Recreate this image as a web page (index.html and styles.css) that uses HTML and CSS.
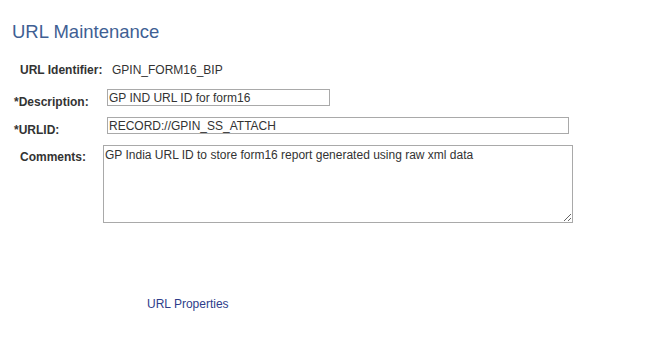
FILE: index.html
```html
<!DOCTYPE html>
<html>
<head>
<meta charset="utf-8">
<link rel="stylesheet" href="styles.css">
</head>
<body>
<div class="page">
  <h1 class="title">URL Maintenance</h1>
  <div class="form">
    <div class="label plain row-id">URL Identifier:</div>
    <div class="value row-id">GPIN_FORM16_BIP</div>

    <div class="label low row-desc">*Description:</div>
    <div class="field row-desc"><input class="input input-desc" type="text" value="GP IND URL ID for form16"></div>

    <div class="label low row-urlid">*URLID:</div>
    <div class="field row-urlid"><input class="input input-urlid" type="text" value="RECORD://GPIN_SS_ATTACH"></div>

    <div class="label plain ta-label row-comm">Comments:</div>
    <div class="field-ta row-comm"><textarea class="textarea">GP India URL ID to store form16 report generated using raw xml data</textarea></div>
  </div>
  <div class="links">
    <a class="link" href="#">URL Properties</a>
  </div>
</div>
</body>
</html>
```

FILE: styles.css
```css
html, body {
  margin: 0;
  padding: 0;
  background: #ffffff;
}
body {
  font-family: "Liberation Sans", Arial, sans-serif;
  font-size: 12px;
  color: #333333;
}
.page {
  padding: 20px 0 0 0;
}
.title {
  margin: 0 0 0 12px;
  font-size: 18.5px;
  font-weight: normal;
  line-height: 24px;
  color: #3f5f94;
}
.form {
  display: grid;
  grid-template-columns: 89px 1fr;
  margin: 17px 0 0 14px;
}
.label {
  box-sizing: border-box;
  font-weight: bold;
  color: #333333;
  line-height: 14px;
}
.label.plain {
  padding-left: 6px;
}
.row-id {
  height: 18px;
  display: flex;
  align-items: center;
}
.row-desc { height: 18px; margin-top: 10px; }
.row-urlid { height: 18px; margin-top: 10px; }
.row-comm { margin-top: 10px; }
.label.low {
  padding-top: 6px;
  height: 18px;
  overflow: visible;
}
.label.ta-label {
  padding-top: 5px;
}
.value {
  padding-left: 9px;
  color: #333333;
}
.field {
  padding-left: 4px;
}
.input {
  box-sizing: border-box;
  display: block;
  height: 17px;
  border: 1px solid #a9a9a9;
  padding: 0 1px;
  margin: 0;
  font-family: "Liberation Sans", Arial, sans-serif;
  font-size: 12px;
  color: #333333;
  background: #ffffff;
  outline: none;
}
.input-desc { width: 223px; }
.input-urlid { width: 462px; }
.textarea {
  box-sizing: border-box;
  display: block;
  width: 470px;
  height: 78px;
  border: 1px solid #a9a9a9;
  padding: 2px 1px;
  margin: 0;
  font-family: "Liberation Sans", Arial, sans-serif;
  font-size: 12px;
  line-height: 14px;
  color: #333333;
  resize: both;
  outline: none;
}
.links {
  margin: 74px 0 0 147px;
}
.link {
  color: #2e3d8a;
  text-decoration: none;
  font-size: 12px;
}
```
